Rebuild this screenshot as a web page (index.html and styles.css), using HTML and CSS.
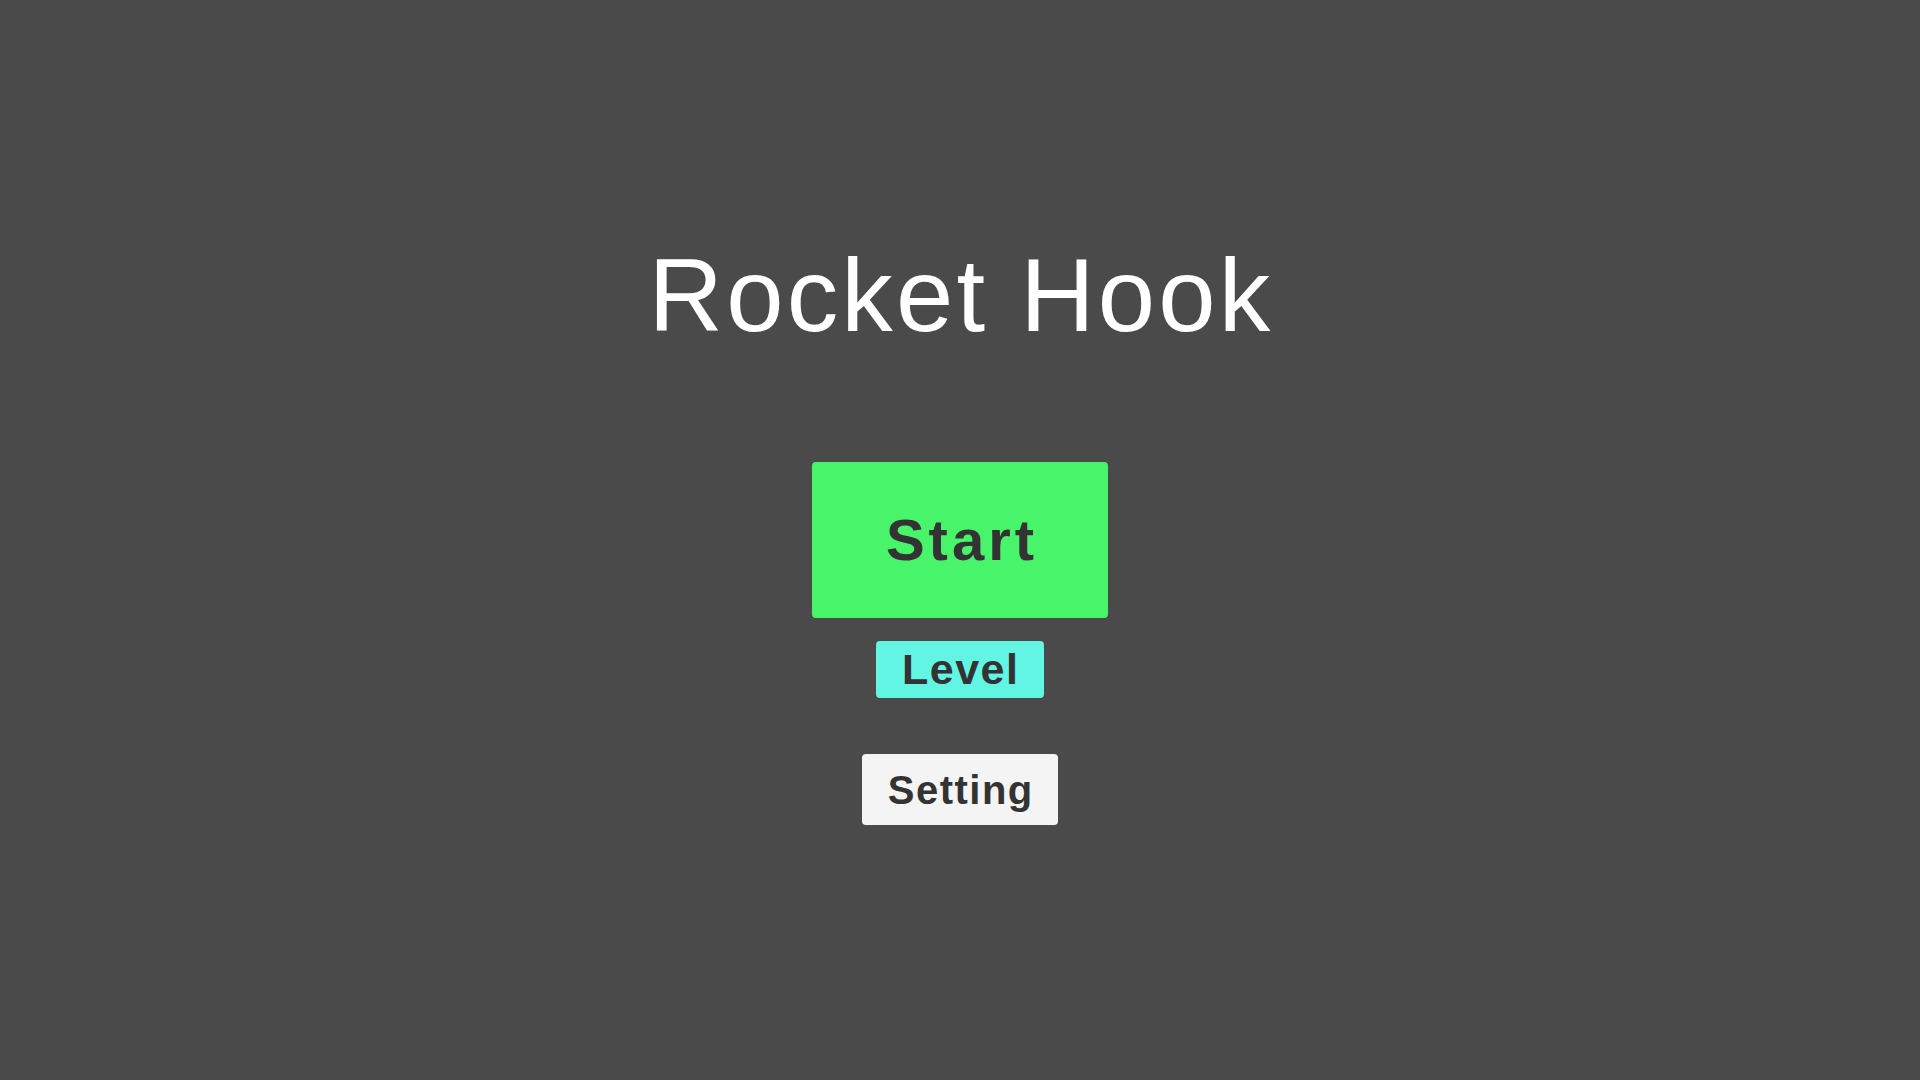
FILE: index.html
```html
<!DOCTYPE html>
<html lang="en">
<head>
<meta charset="utf-8">
<title>Rocket Hook</title>
<link rel="stylesheet" href="styles.css">
</head>
<body>
<main class="menu">
  <h1 class="title">Rocket Hook</h1>
  <button class="btn btn-start">Start</button>
  <button class="btn btn-level">Level</button>
  <button class="btn btn-setting">Setting</button>
</main>
</body>
</html>
```

FILE: styles.css
```css
html, body {
  margin: 0;
  padding: 0;
  width: 100%;
  height: 100%;
  background: #4a4a4a;
  overflow: hidden;
}

.menu {
  display: flex;
  flex-direction: column;
  align-items: center;
  padding-top: 244px;
  font-family: "Liberation Sans", Arial, sans-serif;
}

.title {
  margin: 0 0 115px 2px;
  font-size: 103px;
  line-height: 103px;
  font-weight: 400;
  letter-spacing: 3.2px;
  color: #ffffff;
  white-space: nowrap;
}

.btn {
  display: flex;
  align-items: center;
  justify-content: center;
  border: none;
  padding: 0;
  margin: 0;
  border-radius: 4px;
  font-family: "Liberation Sans", Arial, sans-serif;
  font-weight: 700;
  color: #333333;
  line-height: 1;
  cursor: pointer;
}

.btn-start {
  width: 296px;
  height: 156px;
  background: #48f46a;
  font-size: 58px;
  letter-spacing: 4px;
  padding-left: 4px;
}

.btn-level {
  margin-top: 23px;
  width: 168px;
  height: 57px;
  background: #62f5e4;
  font-size: 43px;
  letter-spacing: 1.5px;
  padding-left: 1.5px;
}

.btn-setting {
  margin-top: 56px;
  width: 196px;
  height: 71px;
  background: #f4f4f4;
  font-size: 40px;
  letter-spacing: 1.5px;
  padding-left: 1.5px;
}
```
